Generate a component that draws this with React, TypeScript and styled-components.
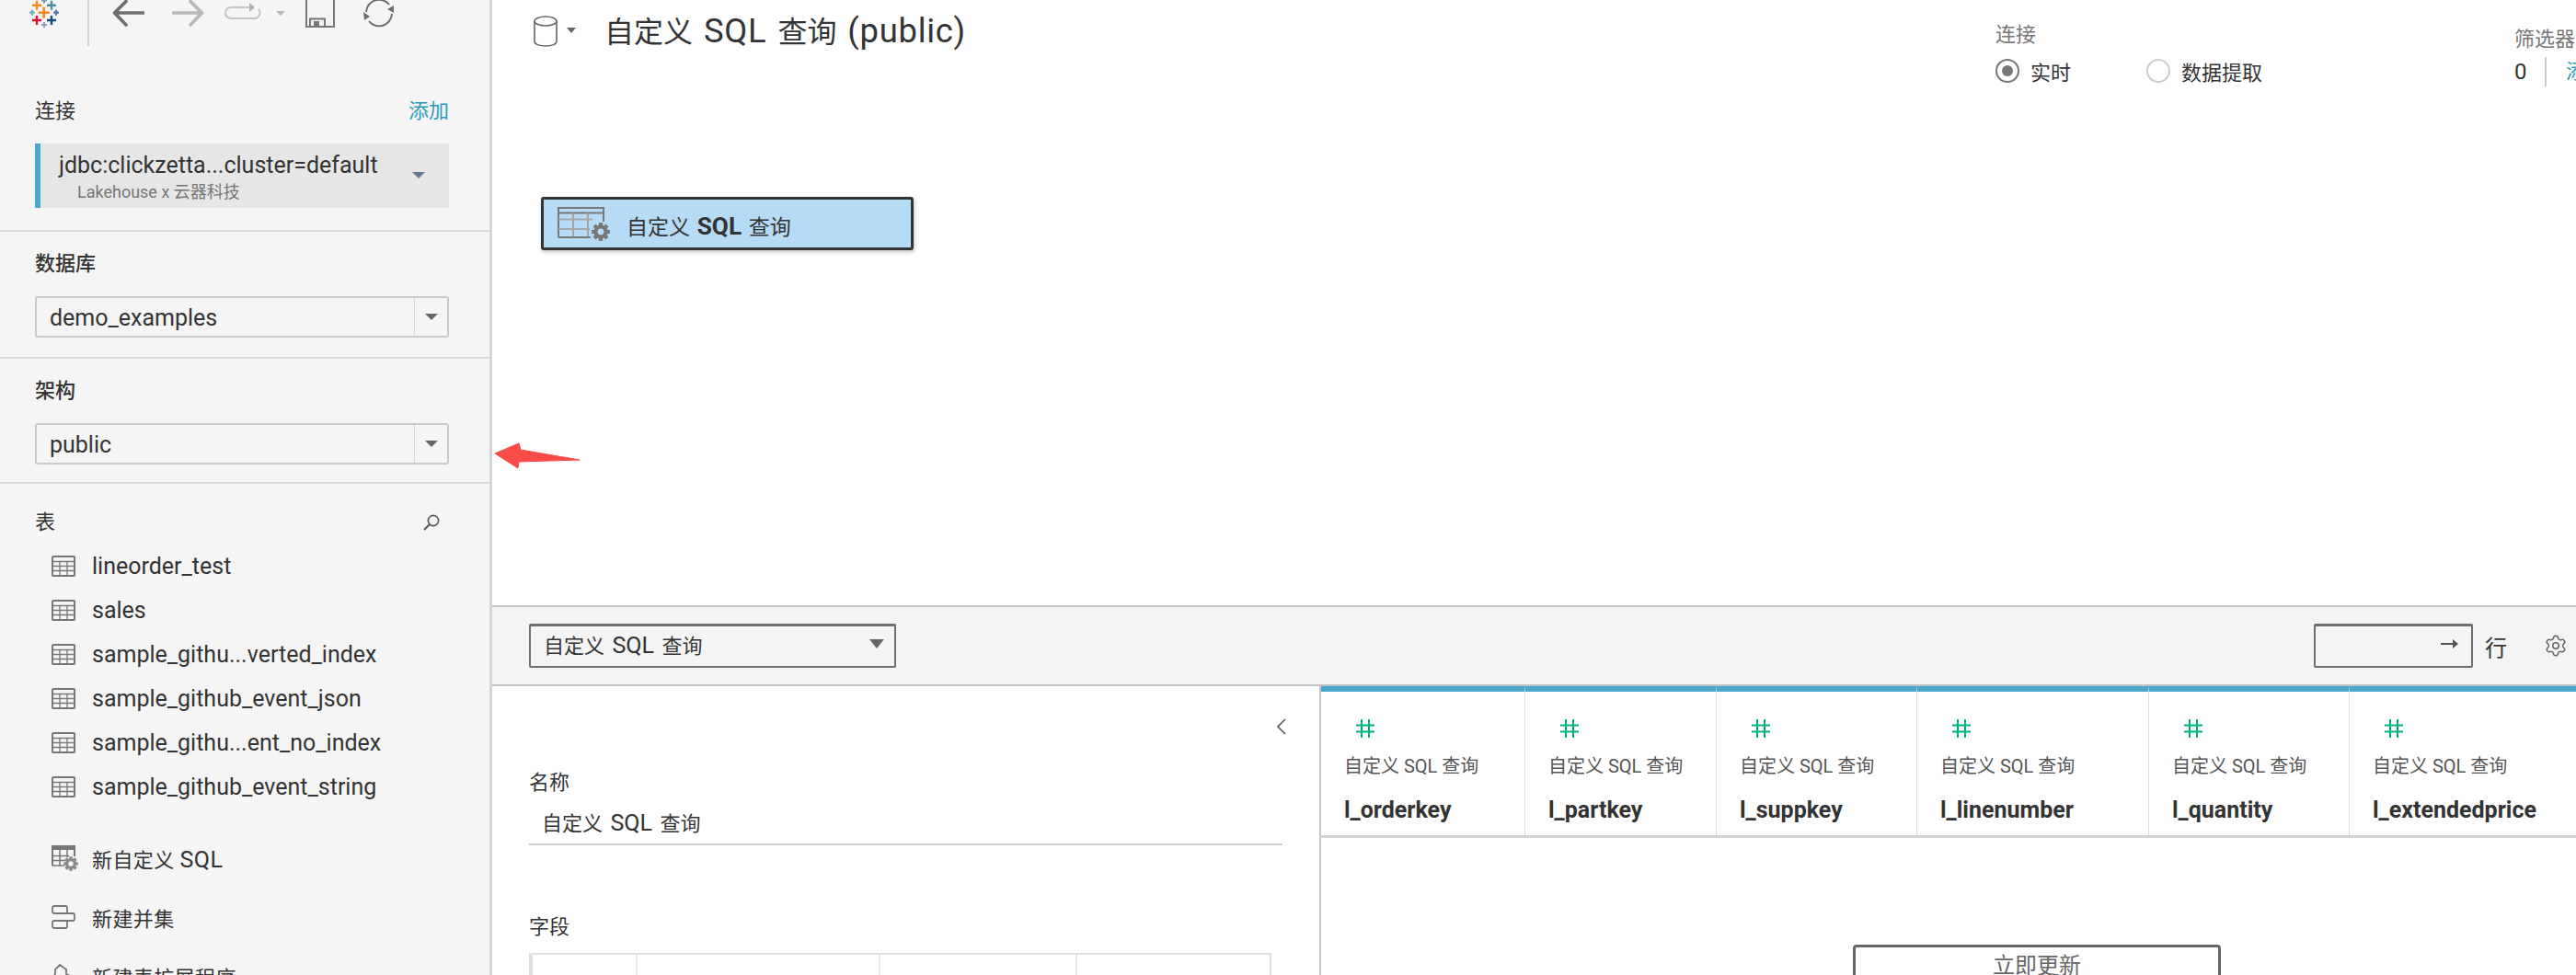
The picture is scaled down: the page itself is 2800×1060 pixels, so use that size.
import React from 'react';
import styled, { createGlobalStyle } from 'styled-components';
import { Settings } from 'lucide-react';

const Global = createGlobalStyle`
  html, body { margin: 0; padding: 0; background: #fff; }
  body { font-family: Roboto, "Noto Sans CJK SC", sans-serif; color: #333; }
  * { box-sizing: border-box; }
`;

const Page = styled.div`
  width: 2800px;
  height: 1060px;
  display: flex;
  overflow: hidden;
  background: #fff;
`;

const Latin = styled.span`
  font-size: 1.14em;
  line-height: 1;
`;

const TitleLatin = styled(Latin)`
  letter-spacing: 0.7px;
`;

const Sidebar = styled.aside`
  flex: none;
  width: 535px;
  height: 1060px;
  background: #f5f5f5;
  border-right: 3px solid #d4d4d4;
  overflow: hidden;
`;

const Toolbar = styled.div`
  height: 50px;
  display: flex;
  align-items: flex-start;
`;

const ToolIcon = styled.svg<{ $left: number }>`
  flex: none;
  display: block;
  margin-left: ${p => p.$left}px;
`;

const ToolDivider = styled.div`
  flex: none;
  width: 2px;
  height: 50px;
  background: #d0d0d0;
  margin-left: 31px;
`;

const Section = styled.section<{ $bottom: number }>`
  padding: 24px 0 ${p => p.$bottom}px 38px;
  border-bottom: 2px solid #d9d9d9;
  width: 532px;
`;

const ConnSection = styled(Section)`
  padding-top: 60px;
`;

const HeadRow = styled.div`
  width: 450px;
  height: 22px;
  display: flex;
  align-items: center;
  justify-content: space-between;
`;

const SectionTitle = styled.span<{ $bold?: boolean }>`
  font-size: 22px;
  line-height: 22px;
  font-weight: ${p => (p.$bold ? 500 : 400)};
  color: #333;
`;

const AddLink = styled.span`
  font-size: 22px;
  line-height: 22px;
  color: #2b9cc0;
`;

const ConnBox = styled.div`
  margin-top: 24px;
  width: 450px;
  height: 70px;
  background: #e6e6e6;
  border-left: 6px solid #4ba6cc;
  padding: 10px 0 0 20px;
  position: relative;
`;

const ConnName = styled.div`
  font-size: 25px;
  line-height: 28px;
  color: #333;
`;

const ConnSub = styled.div`
  font-size: 18px;
  line-height: 24px;
  margin: 3px 0 0 20px;
  color: #757575;
`;

const Caret = styled.span<{ $color?: string; $w?: number; $h?: number }>`
  display: block;
  width: 0;
  height: 0;
  border-left: ${p => p.$w ?? 7}px solid transparent;
  border-right: ${p => p.$w ?? 7}px solid transparent;
  border-top: ${p => p.$h ?? 7}px solid ${p => p.$color ?? '#666'};
`;

const ConnCaret = styled(Caret)`
  position: absolute;
  right: 26px;
  top: 31px;
`;

const SelectBox = styled.div`
  margin-top: 24px;
  width: 450px;
  height: 45px;
  border: 2px solid #cacaca;
  border-radius: 3px;
  display: flex;
  align-items: center;
  font-size: 25px;
  color: #333;
`;

const SelectText = styled.span`
  flex: 1;
  padding: 2px 0 0 14px;
`;

const SelectArrow = styled.span`
  flex: none;
  width: 36px;
  height: 100%;
  border-left: 1px solid #d6d6d6;
  display: flex;
  align-items: center;
  justify-content: center;
`;

const TablesHead = styled.div`
  padding: 31px 0 0 38px;
  width: 532px;
`;

const TablesHeadRow = styled.div`
  width: 440px;
  height: 22px;
  display: flex;
  align-items: center;
  justify-content: space-between;
`;

const TableList = styled.ul`
  list-style: none;
  margin: 12px 0 22px;
  padding: 0;
`;

const TableRow = styled.li`
  height: 48px;
  padding-left: 56px;
  display: flex;
  align-items: center;
  gap: 18px;
  font-size: 25px;
  color: #333;
`;

const ActionRow = styled.div`
  height: 64px;
  padding-left: 56px;
  display: flex;
  align-items: center;
  gap: 18px;
  font-size: 22px;
  color: #333;
  letter-spacing: 0.4px;
`;

const Main = styled.main`
  flex: none;
  width: 2265px;
  height: 1060px;
  overflow: hidden;
  position: relative;
`;

const Upper = styled.div`
  height: 658px;
`;

const HeaderBar = styled.header`
  height: 100px;
  display: flex;
  align-items: flex-start;
`;

const TitleGroup = styled.div`
  flex: none;
  width: 1634px;
  padding: 17px 0 0 45px;
  display: flex;
  align-items: flex-start;
`;

const DbCaret = styled(Caret)`
  margin: 13px 0 0 10px;
`;

const Title = styled.h1`
  margin: -1px 0 0 31px;
  font-size: 32px;
  line-height: 38px;
  font-weight: 400;
  color: #333;
  white-space: nowrap;
  word-spacing: 4px;
`;

const ConnGroup = styled.div`
  flex: none;
  width: 564px;
  padding-top: 27px;
`;

const MutedLabel = styled.div`
  font-size: 22px;
  line-height: 22px;
  color: #777;
`;

const RadioRow = styled.div`
  display: flex;
  align-items: center;
  margin-top: 15px;
  height: 26px;
`;

const RadioItem = styled.label<{ $width: number }>`
  display: flex;
  align-items: center;
  gap: 12px;
  width: ${p => p.$width}px;
  font-size: 22px;
  color: #333;
`;

const RadioDot = styled.span<{ $on?: boolean }>`
  flex: none;
  width: 26px;
  height: 26px;
  border-radius: 50%;
  border: 2px solid ${p => (p.$on ? '#777' : '#ccc')};
  display: flex;
  align-items: center;
  justify-content: center;
  &::after {
    content: '';
    width: 12px;
    height: 12px;
    border-radius: 50%;
    background: ${p => (p.$on ? '#777' : 'transparent')};
  }
`;

const FilterGroup = styled.div`
  flex: none;
  width: 67px;
  padding-top: 32px;
`;

const FilterRow = styled.div`
  margin-top: 8px;
  height: 32px;
  display: flex;
  align-items: center;
  font-size: 24px;
  white-space: nowrap;
`;

const FilterCount = styled.span`
  flex: none;
  width: 33px;
  color: #333;
`;

const FilterLink = styled.span`
  flex: none;
  border-left: 2px solid #ccc;
  height: 32px;
  line-height: 32px;
  padding-left: 21px;
  font-size: 22px;
  color: #2b9cc0;
`;

const NodeCard = styled.div`
  margin: 114px 0 0 53px;
  width: 405px;
  height: 58px;
  background: #b6dbf6;
  border: 3px solid #333;
  border-radius: 3px;
  box-shadow: 1px 2px 4px rgba(0, 0, 0, 0.25);
  display: flex;
  padding: 8px 0 0 15px;
`;

const NodeLabel = styled.span`
  margin: 8px 0 0 17px;
  font-size: 23px;
  line-height: 26px;
  color: #333;
  white-space: nowrap;
  word-spacing: 2px;
  strong { font-weight: 700; }
`;

const Bar = styled.div`
  height: 88px;
  background: #f4f4f4;
  border-top: 2px solid #c2c2c2;
  border-bottom: 2px solid #c2c2c2;
  display: flex;
  align-items: center;
  padding-left: 40px;
`;

const TableSelect = styled.div`
  flex: none;
  width: 399px;
  height: 48px;
  border: 2px solid #6e6e6e;
  border-top-width: 3px;
  border-radius: 2px;
  padding: 0 11px 5px 14px;
  display: flex;
  align-items: center;
  justify-content: space-between;
  font-size: 22px;
  color: #333;
  word-spacing: 3px;
`;

const RowInput = styled.div`
  flex: none;
  margin-left: 1541px;
  width: 173px;
  height: 48px;
  border: 2px solid #6e6e6e;
  border-top-width: 3px;
  border-radius: 2px;
  display: flex;
  align-items: flex-start;
  justify-content: flex-end;
  padding: 10px 13px 0 0;
`;

const RowLabel = styled.span`
  margin-left: 13px;
  font-size: 24px;
  color: #333;
`;

const GearHolder = styled.span`
  margin-left: 40px;
  display: flex;
  color: #666;
`;

const Lower = styled.div`
  display: flex;
  height: 314px;
`;

const LeftPanel = styled.div`
  flex: none;
  width: 901px;
  height: 100%;
  border-right: 2px solid #c8c8c8;
  padding: 0 0 0 40px;
`;

const CollapseRow = styled.div`
  width: 824px;
  padding-top: 35px;
  height: 92px;
  display: flex;
  justify-content: flex-end;
`;

const FieldLabel = styled.div`
  font-size: 22px;
  line-height: 26px;
  color: #333;
`;

const NameField = styled.div`
  margin-top: 16px;
  width: 819px;
  height: 39px;
  padding: 0 0 7px 14px;
  border-bottom: 2px solid #ccc;
  font-size: 22px;
  line-height: 32px;
  color: #333;
  word-spacing: 3px;
`;

const FieldsLabel = styled(FieldLabel)`
  margin-top: 76px;
`;

const MiniTable = styled.div`
  margin-top: 15px;
  width: 807px;
  height: 60px;
  border-top: 2px solid #e0e0e0;
  border-left: 4px solid #e0e0e0;
  border-right: 2px solid #e0e0e0;
  display: grid;
  grid-template-columns: 114px 264px 214px 1fr;
`;

const MiniCol = styled.div`
  border-right: 2px solid #e8e8e8;
  &:last-child { border-right: 0; }
`;

const RightPanel = styled.div`
  flex: 1;
  min-width: 0;
  height: 100%;
  overflow: hidden;
`;

const ColumnStrip = styled.div`
  display: flex;
  height: 165px;
  border-bottom: 3px solid #d4d4d4;
`;

const ColumnCard = styled.div<{ $width: number }>`
  flex: none;
  width: ${p => p.$width}px;
  height: 162px;
  border-top: 6px solid #4ba6cc;
  border-right: 1px solid #dedede;
  padding: 30px 0 0 25px;
`;

const HashIcon = styled.svg`
  display: block;
  margin-left: 13px;
`;

const ColumnSource = styled.div`
  margin-top: 19px;
  font-size: 20px;
  line-height: 24px;
  color: #555;
  white-space: nowrap;
`;

const ColumnName = styled.div`
  margin-top: 21px;
  font-size: 25px;
  line-height: 30px;
  font-weight: 700;
  color: #333;
  white-space: nowrap;
`;

const UpdateRow = styled.div`
  padding: 116px 0 0 578px;
`;

const UpdateButton = styled.button`
  display: block;
  width: 400px;
  height: 46px;
  padding: 0;
  background: #fff;
  border: 3px solid #666;
  border-radius: 4px;
  font-family: inherit;
  font-size: 24px;
  line-height: 32px;
  color: #666;
  text-align: center;
`;

const ArrowMark = styled.svg`
  position: absolute;
  left: 0;
  top: 470px;
`;

function Logo() {
  const crosses: [number, number, number, number, string][] = [
    [47.7, 13.7, 12, 2.6, '#f58a1f'],
    [40, 5.7, 10, 2.4, '#f58a1f'],
    [56, 5.7, 10, 2.4, '#4d8fa6'],
    [48, 0.5, 6, 2.2, '#7d9fb6'],
    [35, 13.7, 6, 2.2, '#78a9ba'],
    [61, 13.7, 6, 2.2, '#5b6fa3'],
    [40, 22, 10, 2.4, '#d9112f'],
    [56, 22, 10, 2.4, '#0f4c86'],
    [48, 27, 6, 2.2, '#8f9fbd'],
  ];
  return (
    <ToolIcon $left={30} width={34} height={34} viewBox="30 0 34 34">
      {crosses.map(([x, y, s, w, c], i) => (
        <path key={i} d={`M${x - s / 2} ${y}H${x + s / 2}M${x} ${y - s / 2}V${y + s / 2}`} stroke={c} strokeWidth={w} fill="none" />
      ))}
    </ToolIcon>
  );
}

function TableIcon() {
  return (
    <svg width={26} height={23} viewBox="0 0 26 23" fill="none" style={{ flex: 'none' }}>
      <rect x="1" y="1" width="24" height="21" fill="#f5f5f5" stroke="#777" strokeWidth="2" rx="1" />
      <path d="M1 6.5H25M1 11.5H25M1 16.5H25M9 6.5V22M17 6.5V22" stroke="#777" strokeWidth="1.3" />
    </svg>
  );
}

function Gear({ cx, cy, r, color }: { cx: number; cy: number; r: number; color: string }) {
  const teeth = Array.from({ length: 8 }, (_, i) => i * 45);
  return (
    <g>
      {teeth.map(a => (
        <rect key={a} x={cx - r * 0.28} y={cy - r * 1.3} width={r * 0.56} height={r * 0.6} fill={color} transform={`rotate(${a} ${cx} ${cy})`} />
      ))}
      <circle cx={cx} cy={cy} r={r * 0.72} fill="none" stroke={color} strokeWidth={r * 0.55} />
    </g>
  );
}

function SqlIcon() {
  return (
    <svg width={31} height={29} viewBox="0 0 31 29" fill="none" style={{ flex: 'none', marginRight: -5 }}>
      <path d="M1 22V1H25V12" stroke="#777" strokeWidth="2" />
      <path d="M1 1H25V5H1Z" fill="#777" />
      <path d="M1 11.5H19M1 16.5H15M1 22H14M9 5V22M17 5V13" stroke="#777" strokeWidth="1.5" />
      <Gear cx={21} cy={20} r={6} color="#8a8a8a" />
    </svg>
  );
}

function UnionIcon() {
  return (
    <svg width={26} height={26} viewBox="0 0 26 26" fill="none" style={{ flex: 'none' }}>
      <path d="M3 1H15A2 2 0 0 1 17 3V9H3A2 2 0 0 1 1 7V3A2 2 0 0 1 3 1Z" stroke="#777" strokeWidth="1.8" />
      <path d="M9 9H23A2 2 0 0 1 25 11V15A2 2 0 0 1 23 17H9" stroke="#777" strokeWidth="1.8" />
      <path d="M3 17H17V23A2 2 0 0 1 15 25H3A2 2 0 0 1 1 23V19A2 2 0 0 1 3 17Z" stroke="#777" strokeWidth="1.8" />
    </svg>
  );
}

function ExtensionIcon() {
  return (
    <svg width={26} height={26} viewBox="0 0 26 26" fill="none" style={{ flex: 'none' }}>
      <path d="M9 1L16 6V11L25 15V24H1V15L4 11V6Z" stroke="#777" strokeWidth="1.8" fill="none" />
    </svg>
  );
}

function NodeIcon() {
  return (
    <svg width={58} height={38} viewBox="0 0 58 38" fill="none" style={{ flex: 'none' }}>
      <path d="M1 33V1H50V16" stroke="#777" strokeWidth="2" />
      <path d="M1 6.5H50" stroke="#777" strokeWidth="2" />
      <path d="M1 13.5H38M1 24H35M1 33H35M17 6.5V33M33 6.5V33" stroke="#a5a5a5" strokeWidth="2" />
      <path d="M1 33H36" stroke="#777" strokeWidth="2" />
      <Gear cx={47} cy={27} r={7.6} color="#777" />
    </svg>
  );
}

const sources = [
  { name: 'l_orderkey', width: 222 },
  { name: 'l_partkey', width: 208 },
  { name: 'l_suppkey', width: 218 },
  { name: 'l_linenumber', width: 252 },
  { name: 'l_quantity', width: 218 },
  { name: 'l_extendedprice', width: 250 },
];

const tables = [
  'lineorder_test',
  'sales',
  'sample_githu...verted_index',
  'sample_github_event_json',
  'sample_githu...ent_no_index',
  'sample_github_event_string',
];

export default function App() {
  return (
    <Page>
      <Global />
      <Sidebar>
        <Toolbar>
          <Logo />
          <ToolDivider />
          <ToolIcon $left={25} width={35} height={32} viewBox="0 0 35 32" fill="none">
            <path d="M15 1.5L2.5 14L15 27M3 14H34" stroke="#6e6e6e" strokeWidth="3.6" strokeLinecap="round" strokeLinejoin="round" />
          </ToolIcon>
          <ToolIcon $left={30} width={35} height={32} viewBox="0 0 35 32" fill="none">
            <path d="M20 1.5L32.5 14L20 27M1 14H32" stroke="#b8b8b8" strokeWidth="3.6" strokeLinecap="round" strokeLinejoin="round" />
          </ToolIcon>
          <ToolIcon $left={21} width={42} height={24} viewBox="0 0 42 24" fill="none">
            <path d="M30 8H8A6 6 0 0 0 8 20H34A6 6 0 0 0 38 10" stroke="#c4c4c4" strokeWidth="2" />
            <path d="M28 3L34 8L28 13Z" fill="#b0b0b0" />
          </ToolIcon>
          <ToolIcon $left={14} width={12} height={28} viewBox="0 0 12 28">
            <path d="M1 12H11L6 17Z" fill="#b8b8b8" />
          </ToolIcon>
          <ToolIcon $left={20} width={33} height={32} viewBox="0 0 33 32" fill="none">
            <path d="M2 -3V29H32V-3" stroke="#777" strokeWidth="2" />
            <path d="M6 29V20.5H22V29" stroke="#777" strokeWidth="2" />
            <rect x="10" y="23" width="6" height="6" fill="#777" />
          </ToolIcon>
          <ToolIcon $left={30} width={36} height={32} viewBox="0 0 36 32" fill="none">
            <path d="M4 13A14 14 0 0 1 29 5M32 15A14 14 0 0 1 7 23" stroke="#6e6e6e" strokeWidth="2" />
            <path d="M34 6V14L27 10ZM1 13L2 22L8 18Z" fill="#6e6e6e" />
          </ToolIcon>
        </Toolbar>

        <ConnSection $bottom={24}>
          <HeadRow>
            <SectionTitle>连接</SectionTitle>
            <AddLink>添加</AddLink>
          </HeadRow>
          <ConnBox>
            <ConnName>jdbc:clickzetta...cluster=default</ConnName>
            <ConnSub>Lakehouse x 云器科技</ConnSub>
            <ConnCaret $color="#67788a" />
          </ConnBox>
        </ConnSection>

        <Section $bottom={21}>
          <HeadRow>
            <SectionTitle $bold>数据库</SectionTitle>
          </HeadRow>
          <SelectBox>
            <SelectText>demo_examples</SelectText>
            <SelectArrow><Caret /></SelectArrow>
          </SelectBox>
        </Section>

        <Section $bottom={19}>
          <HeadRow>
            <SectionTitle $bold>架构</SectionTitle>
          </HeadRow>
          <SelectBox>
            <SelectText>public</SelectText>
            <SelectArrow><Caret /></SelectArrow>
          </SelectBox>
        </Section>

        <TablesHead>
          <TablesHeadRow>
            <SectionTitle>表</SectionTitle>
            <svg width={18} height={18} viewBox="0 0 18 18" fill="none">
              <circle cx="11" cy="7" r="5.6" stroke="#555" strokeWidth="1.6" />
              <path d="M7 11L1 17" stroke="#555" strokeWidth="2" />
            </svg>
          </TablesHeadRow>
        </TablesHead>
        <TableList>
          {tables.map(t => (
            <TableRow key={t}><TableIcon />{t}</TableRow>
          ))}
        </TableList>
        <ActionRow><SqlIcon /><span>新自定义 <Latin>SQL</Latin></span></ActionRow>
        <ActionRow><UnionIcon />新建并集</ActionRow>
        <ActionRow><ExtensionIcon />新建表扩展程序</ActionRow>
      </Sidebar>

      <Main>
        <Upper>
          <HeaderBar>
            <TitleGroup>
              <svg width={26} height={34} viewBox="0 0 26 34" fill="none" style={{ flex: 'none' }}>
                <path d="M1 6V28C1 31 6 33 13 33S25 31 25 28V6" stroke="#666" strokeWidth="1.6" />
                <ellipse cx="13" cy="6" rx="12" ry="5" stroke="#666" strokeWidth="1.6" />
              </svg>
              <DbCaret $w={5} $h={6} />
              <Title>自定义 <TitleLatin>SQL</TitleLatin> 查询 <TitleLatin>(public)</TitleLatin></Title>
            </TitleGroup>
            <ConnGroup>
              <MutedLabel>连接</MutedLabel>
              <RadioRow>
                <RadioItem $width={164}><RadioDot $on />实时</RadioItem>
                <RadioItem $width={140}><RadioDot />数据提取</RadioItem>
              </RadioRow>
            </ConnGroup>
            <FilterGroup>
              <MutedLabel>筛选器</MutedLabel>
              <FilterRow>
                <FilterCount>0</FilterCount>
                <FilterLink>添加</FilterLink>
              </FilterRow>
            </FilterGroup>
          </HeaderBar>
          <NodeCard>
            <NodeIcon />
            <NodeLabel>自定义 <Latin><strong>SQL</strong></Latin> 查询</NodeLabel>
          </NodeCard>
        </Upper>

        <Bar>
          <TableSelect>
            <span>自定义 <Latin>SQL</Latin> 查询</span>
            <Caret $w={8} $h={10} />
          </TableSelect>
          <RowInput>
            <svg width={20} height={18} viewBox="0 0 20 18" fill="none">
              <path d="M0 9H16" stroke="#555" strokeWidth="2" />
              <path d="M13 4L19 9L13 14Z" fill="#555" />
            </svg>
          </RowInput>
          <RowLabel>行</RowLabel>
          <GearHolder><Settings size={26} strokeWidth={1.4} /></GearHolder>
        </Bar>

        <Lower>
          <LeftPanel>
            <CollapseRow>
              <svg width={12} height={18} viewBox="0 0 12 18" fill="none">
                <path d="M10 1L2 9L10 17" stroke="#555" strokeWidth="1.6" />
              </svg>
            </CollapseRow>
            <FieldLabel>名称</FieldLabel>
            <NameField>自定义 <Latin>SQL</Latin> 查询</NameField>
            <FieldsLabel>字段</FieldsLabel>
            <MiniTable>
              <MiniCol /><MiniCol /><MiniCol /><MiniCol />
            </MiniTable>
          </LeftPanel>
          <RightPanel>
            <ColumnStrip>
              {sources.map(c => (
                <ColumnCard key={c.name} $width={c.width}>
                  <HashIcon width={20} height={20} viewBox="0 0 20 20" fill="none">
                    <path d="M6 0V20M14 0V20M0 6.5H20M0 13.5H20" stroke="#00b180" strokeWidth="2" />
                  </HashIcon>
                  <ColumnSource>自定义 SQL 查询</ColumnSource>
                  <ColumnName>{c.name}</ColumnName>
                </ColumnCard>
              ))}
            </ColumnStrip>
            <UpdateRow>
              <UpdateButton>立即更新</UpdateButton>
            </UpdateRow>
          </RightPanel>
        </Lower>

        <ArrowMark width={100} height={50} viewBox="0 0 100 50">
          <path d="M3 23L29 12L31 19L95 30L29 32L28 39Z" fill="#f94c48" stroke="#f94c48" strokeWidth="1" strokeLinejoin="round" />
        </ArrowMark>
      </Main>
    </Page>
  );
}
